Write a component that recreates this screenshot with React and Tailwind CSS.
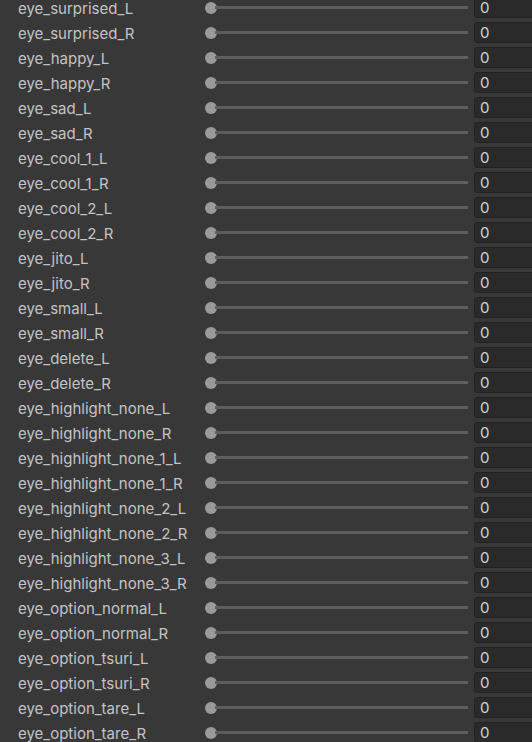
import React from "react";

const names = [
  "eye_surprised_L",
  "eye_surprised_R",
  "eye_happy_L",
  "eye_happy_R",
  "eye_sad_L",
  "eye_sad_R",
  "eye_cool_1_L",
  "eye_cool_1_R",
  "eye_cool_2_L",
  "eye_cool_2_R",
  "eye_jito_L",
  "eye_jito_R",
  "eye_small_L",
  "eye_small_R",
  "eye_delete_L",
  "eye_delete_R",
  "eye_highlight_none_L",
  "eye_highlight_none_R",
  "eye_highlight_none_1_L",
  "eye_highlight_none_1_R",
  "eye_highlight_none_2_L",
  "eye_highlight_none_2_R",
  "eye_highlight_none_3_L",
  "eye_highlight_none_3_R",
  "eye_option_normal_L",
  "eye_option_normal_R",
  "eye_option_tsuri_L",
  "eye_option_tsuri_R",
  "eye_option_tare_L",
  "eye_option_tare_R",
];

const Row = ({ name }) => (
  <div className="flex h-[25px] items-center">
    <div className="w-[205px] shrink-0 pl-[18px] pt-[2px] text-[15px] leading-[20px] text-[#c4c4c4] whitespace-nowrap overflow-hidden">
      {name}
    </div>
    <div className="flex flex-1 items-center">
      <div className="h-[12px] w-[12px] shrink-0 rounded-full bg-[#9a9a9a]" />
      <div className="-ml-[2px] h-[3px] flex-1 bg-[#5e5e5e]" />
    </div>
    <div className="ml-[6px] flex h-[21px] w-[62px] shrink-0 items-center rounded-[3px] border border-[#222222] bg-[#2a2a2a] pl-[5px] pt-[1px] text-[15px] text-[#d2d2d2]">
      0
    </div>
  </div>
);

const App = () => {
  return (
    <div
      className="h-[742px] w-[532px] overflow-hidden bg-[#383838]"
      style={{ fontFamily: "Inter, 'Noto Sans', sans-serif" }}
    >
      <div className="-mt-[5px] -mr-[4px]">
        {names.map((n) => (
          <Row key={n} name={n} />
        ))}
      </div>
    </div>
  );
};

export default App;
